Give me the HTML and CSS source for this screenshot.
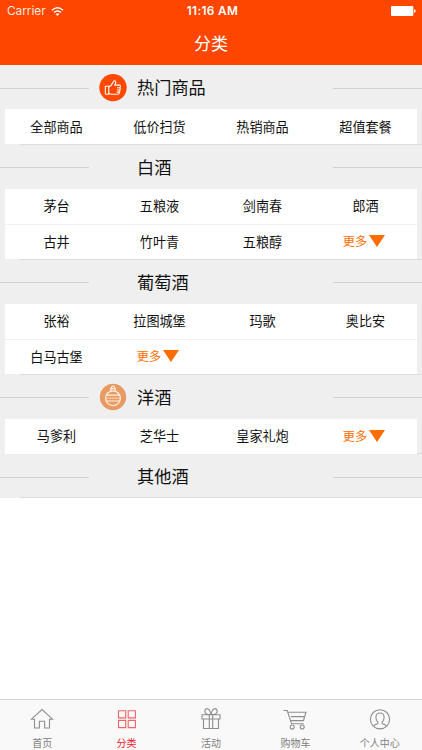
FILE: index.html
```html
<!DOCTYPE html>
<html lang="zh-CN">
<head>
    <meta charset="UTF-8">
    <meta name="viewport" content="width=device-width, initial-scale=1.0">
    <title>分类</title>
    <link rel="stylesheet" href="styles.css">
</head>
<body>
<!-- Header -->
<header class="header">
    <div class="status-bar">
        <div class="carrier">
            <span>Carrier</span>
            <svg class="wifi" width="13" height="9" viewBox="0 0 13 9">
                <path d="M0.9 3.2Q6.5 -1.5 12.1 3.2M3 5.4Q6.5 2.6 10 5.4" fill="none" stroke="#fff" stroke-width="1.4"/>
                <path d="M4.6 7Q6.5 5.6 8.4 7L6.5 9Z" fill="#fff"/>
            </svg>
        </div>
        <span class="time">11:16 AM</span>
        <div class="power">
            <svg width="25" height="10" viewBox="0 0 25 10">
                <rect width="22.3" height="10" rx="1" fill="#fff"/>
                <path d="M23 3.2Q24.7 3.5 24.7 5T23 6.8Z" fill="#fff"/>
            </svg>
        </div>
    </div>
    <h1 class="title">分类</h1>
</header>

<!-- Category list -->
<main class="list">
    <section class="category">
        <div class="category-head">
            <span class="icon">
                <svg width="28" height="28" viewBox="0 0 28 28">
                    <circle cx="14" cy="13.6" r="13.7" fill="#ff4800"/>
                    <g fill="none" stroke="#fff" stroke-width="1.1" stroke-linejoin="round" stroke-linecap="round">
                        <path d="M6.3 12.2H9.8V20.3H7.3Q6.3 20.3 6.3 19.2Z"/>
                        <path d="M9.9 12.8L12.3 11.2L14.6 7.2Q15.7 6.3 16.5 7.2T15.8 11.1H20.3Q21.6 11.2 21.4 12.5T20.9 13.8Q21.8 14.8 20.7 16Q21.4 17 20.3 18.1Q20.5 20.3 18.6 20.3H12.5L9.9 19.5M18.5 13.8H20.9M18.3 16H20.6M18.2 18.1H20.2"/>
                    </g>
                </svg>
            </span>
            <h2>热门商品</h2>
        </div>
        <ul class="items">
            <li>全部商品</li>
            <li>低价扫货</li>
            <li>热销商品</li>
            <li>超值套餐</li>
        </ul>
    </section>

    <section class="category">
        <div class="category-head">
            <span class="icon"></span>
            <h2>白酒</h2>
        </div>
        <ul class="items">
            <li>茅台</li>
            <li>五粮液</li>
            <li>剑南春</li>
            <li>郎酒</li>
            <li>古井</li>
            <li>竹叶青</li>
            <li>五粮醇</li>
            <li class="more">更多</li>
        </ul>
    </section>

    <section class="category">
        <div class="category-head">
            <span class="icon"></span>
            <h2>葡萄酒</h2>
        </div>
        <ul class="items">
            <li>张裕</li>
            <li>拉图城堡</li>
            <li>玛歌</li>
            <li>奥比安</li>
            <li>白马古堡</li>
            <li class="more">更多</li>
            <li></li>
            <li></li>
        </ul>
    </section>

    <section class="category">
        <div class="category-head">
            <span class="icon">
                <svg width="28" height="28" viewBox="0 0 28 28">
                    <circle cx="14" cy="14" r="13.2" fill="#e89a62"/>
                    <g fill="none" stroke="#fff3e4" stroke-width="1.2">
                        <circle cx="14" cy="15.2" r="7.4"/>
                        <path d="M11.8 8V5.6H16.2V8M12.4 5.4Q12.2 3.2 14 3.2T15.6 5.4M7.3 12.2H20.7M7.2 18H20.8"/>
                        <path d="M6.8 15.2H21.2" stroke-width="0.7"/>
                    </g>
                </svg>
            </span>
            <h2>洋酒</h2>
        </div>
        <ul class="items">
            <li>马爹利</li>
            <li>芝华士</li>
            <li>皇家礼炮</li>
            <li class="more">更多</li>
        </ul>
    </section>

    <section class="category">
        <div class="category-head">
            <span class="icon"></span>
            <h2>其他酒</h2>
        </div>
    </section>
</main>

<!-- Tab bar -->
<nav class="tab-bar">
    <a class="tab">
        <svg width="24" height="24" viewBox="0 0 24 24">
            <path d="M1.5 12.2L12 2.6L22.5 12.2H19.5V21H14.6V14.2H9.4V21H4.5V12.2Z"/>
        </svg>
        <span>首页</span>
    </a>
    <a class="tab active">
        <svg width="24" height="24" viewBox="0 0 24 24">
            <path d="M3.5 3.7H10.7V10.9H3.5ZM13.2 3.7H20.4V10.9H13.2ZM3.5 13.4H10.7V20.6H3.5ZM13.2 13.4H20.4V20.6H13.2Z"/>
        </svg>
        <span>分类</span>
    </a>
    <a class="tab">
        <svg width="24" height="24" viewBox="0 0 24 24">
            <path d="M3 7.8H21V12H3ZM4.5 12V21.5H19.5V12M10.3 7.8V21.5M13.7 7.8V21.5M11.8 7.6Q5.8 7.4 5.8 4.4Q6 1.4 8.7 1.7Q11.2 2.6 11.8 7.6ZM12.2 7.6Q18.2 7.4 18.2 4.4Q18 1.4 15.3 1.7Q12.8 2.6 12.2 7.6Z"/>
        </svg>
        <span>活动</span>
    </a>
    <a class="tab">
        <svg width="24" height="24" viewBox="0 0 24 24">
            <path d="M0.5 3.5H4.2L8.6 16.8H20.8M5 5.2H23L20.4 13.6H7.6M8 9.6H21"/>
            <circle cx="9.2" cy="20" r="2"/>
            <circle cx="19.2" cy="20" r="2"/>
        </svg>
        <span>购物车</span>
    </a>
    <a class="tab">
        <svg width="24" height="24" viewBox="0 0 24 24">
            <circle cx="12" cy="12.3" r="9.6"/>
            <path d="M5.5 19Q6.5 17.6 9.8 16.7V15Q7.8 13 7.9 10Q8.2 6 12 6T16.1 10Q16.2 13 14.2 15V16.7Q17.5 17.6 18.5 19"/>
        </svg>
        <span>个人中心</span>
    </a>
</nav>
</body>
</html>
```
FILE: styles.css
```css
* {
    box-sizing: border-box;
}

body {
    margin: 0;
    height: 750px;
    display: flex;
    flex-direction: column;
    background-color: #fff;
    font-family: "Noto Sans CJK SC", sans-serif;
    color: #111;
    overflow: hidden;
}

h1, h2, ul {
    margin: 0;
    padding: 0;
    font-weight: normal;
    list-style: none;
}

svg {
    display: block;
    overflow: visible;
}

/* Header */
.header {
    height: 65px;
    background-color: #ff4600;
    color: #fff;
}

.status-bar {
    display: grid;
    grid-template-columns: 1fr auto 1fr;
    align-items: center;
    height: 22px;
    padding: 0 6px 0 7px;
    font-family: Inter, sans-serif;
    font-size: 12px;
}

.carrier {
    display: flex;
    align-items: center;
    gap: 5px;
    font-size: 11.8px;
    color: #ffe9df;
}

.time {
    font-size: 11.8px;
    font-weight: 600;
    letter-spacing: 0.35px;
    padding-left: 2px;
}

.power {
    display: flex;
    justify-content: flex-end;
}

.title {
    height: 43px;
    line-height: 42px;
    font-size: 17px;
    text-align: center;
}

/* Category list */
.category {
    background-color: #efefef;
    background-image: linear-gradient(#dedee1, #dedee1);
    background-repeat: no-repeat;
    background-size: 100% 1px;
    background-position: 20px 100%;
}

.category-head {
    display: flex;
    align-items: center;
    height: 44px;
    padding-top: 1px;
}

.category-head::before,
.category-head::after {
    content: "";
    width: 89px;
    height: 1px;
    margin-top: 1px;
    background-color: #d2d2d2;
}

.category-head::after {
    margin-left: auto;
}

.icon {
    width: 28px;
    height: 28px;
    margin: 0 10px;
}

.category-head h2 {
    font-size: 17.2px;
    line-height: 24px;
    padding-bottom: 1px;
}

.items {
    display: grid;
    grid-template-columns: repeat(4, 1fr);
    margin: 0 5px;
    padding-bottom: 0.5px;
}

.items li {
    display: flex;
    align-items: center;
    justify-content: center;
    height: 35px;
    padding-bottom: 1px;
    background-color: #fff;
    font-size: 13.1px;
}

.items li:nth-child(n+5) {
    height: 35.5px;
    border-top: 1px solid #f0f0f0;
}

.items .more {
    gap: 2px;
    padding-right: 3px;
    font-size: 12.2px;
    color: #ff6d00;
}

.more::after {
    content: "";
    border: 8px solid transparent;
    border-top: 12px solid #ff6d00;
    border-bottom: 0;
}

/* Tab bar */
.tab-bar {
    display: flex;
    height: 51px;
    margin-top: auto;
    border-top: 1px solid #d5d5d5;
    background-color: #f9f9f9;
}

.tab {
    flex: 1;
    display: flex;
    flex-direction: column;
    align-items: center;
    padding-top: 7px;
    font-size: 10px;
    line-height: 14px;
    color: #808080;
}

.tab span {
    margin-top: 5px;
}

.tab svg {
    fill: none;
    stroke: #8e8e8e;
    stroke-width: 1.1;
}

.tab.active {
    color: #e8202a;
}

.tab.active svg {
    stroke: #f06468;
}
```
